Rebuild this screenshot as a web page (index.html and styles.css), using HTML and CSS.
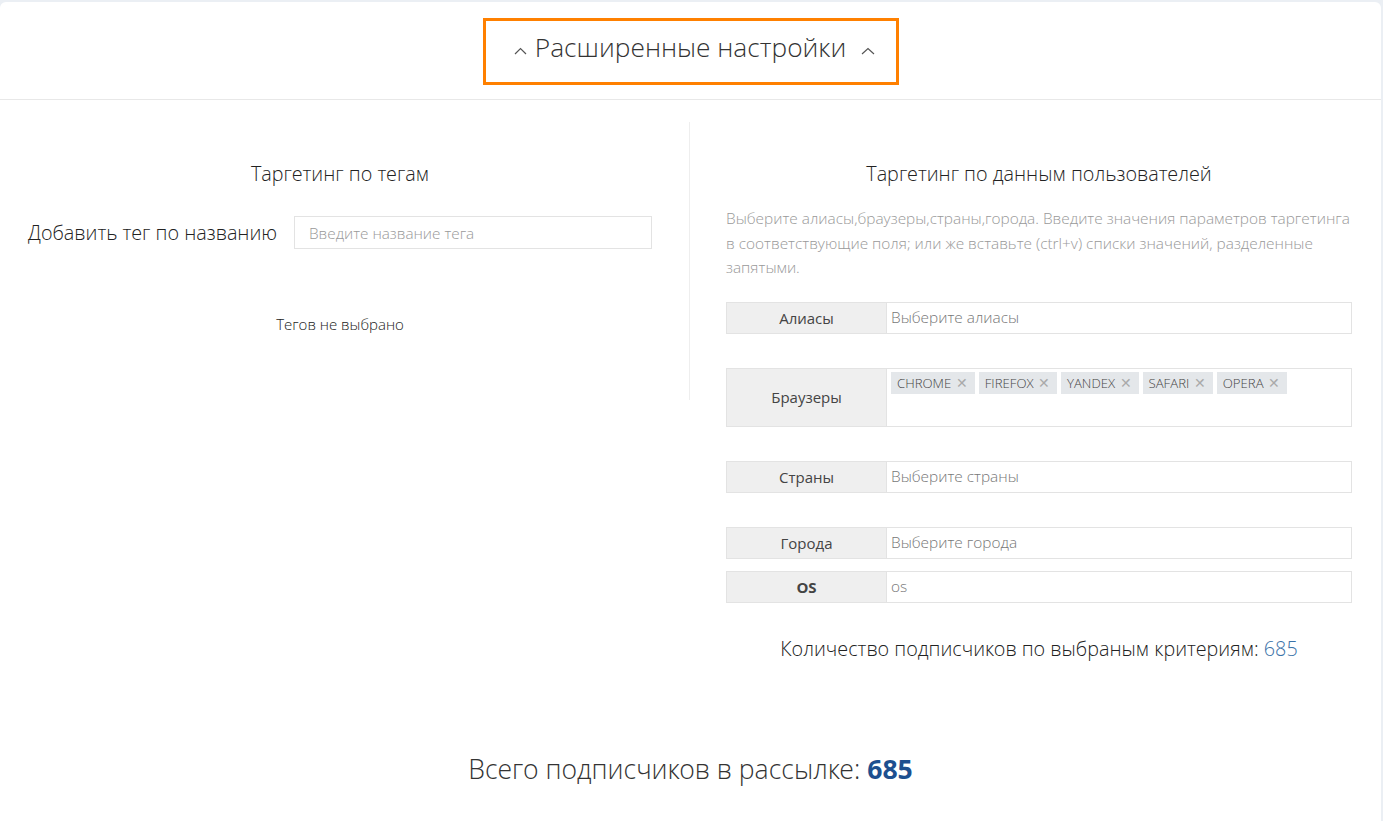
FILE: index.html
```html
<!DOCTYPE html>
<html>
  <head>
    <meta charset="UTF-8" />
    <title>Расширенные настройки</title>
    <link rel="stylesheet" href="styles.css">
  </head>
  <body>
    <div class="card">
      <div class="card-head">
        <div class="toggle">
          <svg class="chev chev-left" width="13" height="8" viewBox="0 0 13 8"><polyline points="1,7 6.5,1.5 12,7" fill="none" stroke="#555" stroke-width="1.2" /></svg>
          <span class="toggle-title">Расширенные настройки</span>
          <svg class="chev chev-right" width="14" height="8" viewBox="0 0 14 8"><polyline points="1,7 7,1.5 13,7" fill="none" stroke="#555" stroke-width="1.2" /></svg>
        </div>
      </div>

      <div class="columns">
        <div class="col col-tags">
          <h3 class="col-title">Таргетинг по тегам</h3>
          <div class="tag-add">
            <label class="tag-label">Добавить тег по названию</label>
            <input type="text" class="tag-input" placeholder="Введите название тега" />
          </div>
          <p class="tags-empty">Тегов не выбрано</p>
        </div>

        <div class="col col-users">
          <h3 class="col-title">Таргетинг по данным пользователей</h3>
          <p class="hint">Выберите алиасы,браузеры,страны,города. Введите значения параметров таргетинга в соответствующие поля; или же вставьте (ctrl+v) списки значений, разделенные запятыми.</p>

          <div class="field">
            <div class="field-label">Алиасы</div>
            <div class="field-value placeholder">Выберите алиасы</div>
          </div>

          <div class="field field-tall">
            <div class="field-label">Браузеры</div>
            <div class="field-value chips">
              <span class="chip">CHROME <i>✕</i></span>
              <span class="chip">FIREFOX <i>✕</i></span>
              <span class="chip">YANDEX <i>✕</i></span>
              <span class="chip">SAFARI <i>✕</i></span>
              <span class="chip">OPERA <i>✕</i></span>
            </div>
          </div>

          <div class="field">
            <div class="field-label">Страны</div>
            <div class="field-value placeholder">Выберите страны</div>
          </div>

          <div class="field">
            <div class="field-label">Города</div>
            <div class="field-value placeholder">Выберите города</div>
          </div>

          <div class="field field-near">
            <div class="field-label field-label-bold">OS</div>
            <div class="field-value placeholder">os</div>
          </div>

          <p class="count">Количество подписчиков по выбраным критериям: <span class="count-num">685</span></p>
        </div>
      </div>

      <p class="total">Всего подписчиков в рассылке: <b class="total-num">685</b></p>
    </div>
  </body>
</html>
```

FILE: styles.css
```css
body {
  margin: 0;
  background: #ebeff4;
  font-family: "Open Sans", "Liberation Sans", sans-serif;
  color: #333;
}
.card {
  width: 1381px;
  margin-top: 2px;
  background: #fff;
  border-radius: 6px 6px 0 0;
  min-height: 830px;
}
.card-head {
  height: 98px;
  border-bottom: 1px solid #e8e8e8;
  display: flex;
  justify-content: center;
  padding-top: 16px;
  box-sizing: border-box;
}
.toggle {
  width: 416px;
  height: 67px;
  box-sizing: border-box;
  border: 3px solid #ff8000;
  display: flex;
  align-items: center;
  justify-content: center;
  padding-left: 8px;
}
.toggle-title {
  font-family: "Open Sans Light", "Open Sans", sans-serif;
  font-size: 26.3px;
  font-weight: 300;
  color: #333;
  margin: 0 15px 0 8px;
  position: relative;
  top: -5px;
}
.chev {
  position: relative;
  top: -1px;
}
.columns {
  display: flex;
  padding-top: 22px;
}
.col {
  box-sizing: border-box;
}
.col-tags {
  width: 690px;
  height: 278px;
  border-right: 1px solid #eee;
  padding: 0 37px 0 28px;
}
.col-users {
  width: 691px;
  padding: 0 29px 0 36px;
}
.col-title {
  margin: 39px 0 0;
  font-family: "Open Sans Light", "Open Sans", sans-serif;
  font-size: 19.8px;
  font-weight: 300;
  line-height: 26px;
  text-align: center;
  color: #222;
}
.tag-add {
  display: flex;
  align-items: center;
  justify-content: space-between;
  margin-top: 29px;
}
.tag-label {
  font-family: "Open Sans Light", "Open Sans", sans-serif;
  font-size: 19.8px;
  font-weight: 300;
  color: #222;
  white-space: nowrap;
}
.tag-input {
  width: 358px;
  height: 33px;
  box-sizing: border-box;
  border: 1px solid #e3e3e3;
  padding: 0 14px;
  font-family: inherit;
  font-size: 15.3px;
  font-weight: 300;
}
.tag-input::placeholder {
  color: #999;
}
.tags-empty {
  margin: 65px 0 0;
  text-align: center;
  font-size: 15px;
  line-height: 20px;
  font-weight: 300;
  color: #222;
}
.hint {
  margin: 20px 0 21px;
  font-size: 15.4px;
  font-weight: 300;
  line-height: 24.5px;
  color: #999;
}
.field {
  display: flex;
  min-height: 32px;
  border: 1px solid #e3e3e3;
  margin-bottom: 34px;
  box-sizing: border-box;
}
.field-near {
  margin-top: -22px;
  margin-bottom: 32px;
}
.field-tall {
  height: 59px;
}
.field-label {
  width: 159px;
  flex: none;
  background: #efefef;
  border-right: 1px solid #e3e3e3;
  display: flex;
  align-items: center;
  justify-content: center;
  font-size: 15px;
  color: #444;
}
.field-label-bold {
  font-weight: 700;
}
.field-value {
  flex: 1;
  display: flex;
  align-items: center;
  padding: 0 4px;
  font-size: 15.4px;
  font-weight: 300;
}
.placeholder {
  color: #777;
}
.chips {
  align-items: flex-start;
  padding: 3px 4px;
  gap: 4px;
}
.chip {
  background: #e4e7ea;
  font-size: 13.2px;
  font-weight: 300;
  color: #444;
  height: 22px;
  line-height: 22px;
  padding: 0 7px 0 6px;
}
.chip i {
  font-style: normal;
  color: #aaa;
  font-size: 14px;
  margin-left: 1px;
}
.count {
  margin: 0;
  text-align: center;
  font-family: "Open Sans Light", "Open Sans", sans-serif;
  font-size: 19.8px;
  font-weight: 300;
  color: #222;
  line-height: 28px;
}
.count-num {
  color: #3a72a8;
}
.total {
  margin: 88px 0 0;
  text-align: center;
  font-family: "Open Sans Light", "Open Sans", sans-serif;
  font-size: 26.6px;
  font-weight: 300;
  color: #333;
}
.total-num {
  font-family: "Open Sans", sans-serif;
  font-weight: 700;
  color: #1d4f8f;
}
```
